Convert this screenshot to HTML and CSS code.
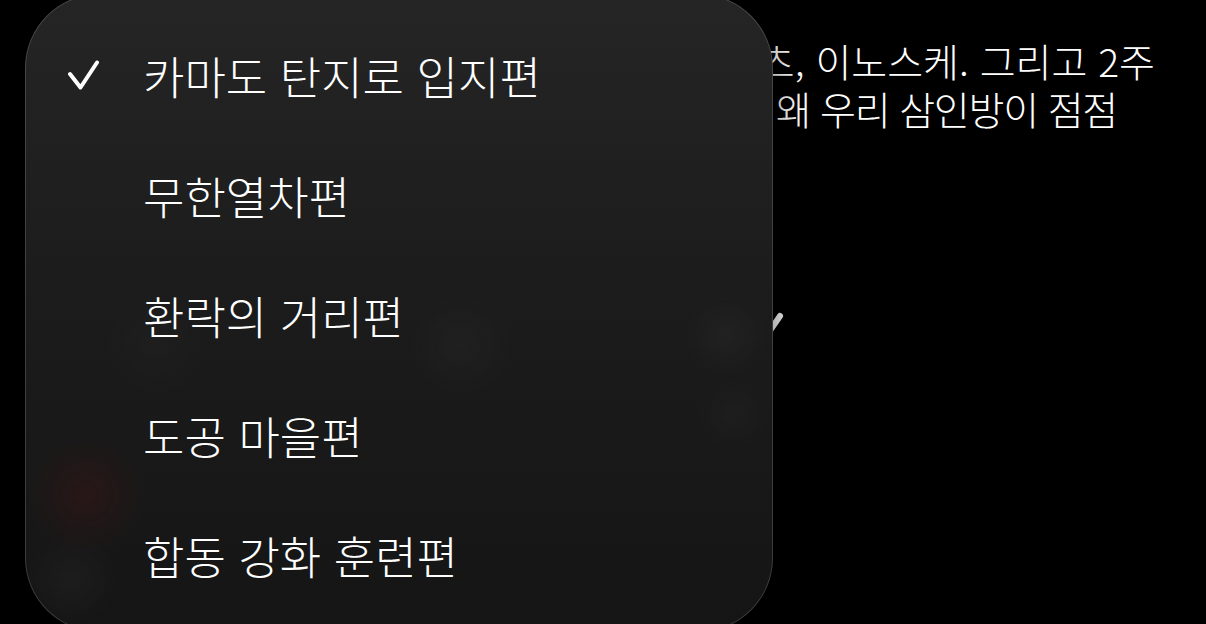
FILE: index.html
```html
<!DOCTYPE html>
<html lang="ko">
<head>
    <meta charset="UTF-8">
    <meta name="viewport" content="width=device-width, initial-scale=1.0">
    <title>귀멸의 칼날 - 시즌 선택</title>
    <link rel="stylesheet" href="styles.css">
</head>
<body>
    <div class="page">
        <div class="synopsis">
            <p class="line">젠이츠, 이노스케. 그리고 2주</p>
            <p class="line line-short">그런데 나 왜 우리 삼인방이 점점</p>
        </div>
        <div class="toggle">
            <svg width="30" height="24" viewBox="0 0 30 24">
                <path d="M4 4 L15 20 L26 4" fill="none" stroke="#fff" stroke-width="6" stroke-linecap="round" stroke-linejoin="round"/>
            </svg>
        </div>
    </div>

    <!-- season picker, opened over the page -->
    <div class="menu">
        <ul class="menu-list">
            <li class="item selected">
                <span class="check">
                    <svg width="32" height="30" viewBox="0 0 32 30">
                        <path d="M2 14 L12.5 27.5 L29 2.5" fill="none" stroke="#fff" stroke-width="4" stroke-linecap="round" stroke-linejoin="round"/>
                    </svg>
                </span>
                <span class="label">카마도 탄지로 입지편</span>
            </li>
            <li class="item">
                <span class="check"></span>
                <span class="label">무한열차편</span>
            </li>
            <li class="item">
                <span class="check"></span>
                <span class="label">환락의 거리편</span>
            </li>
            <li class="item">
                <span class="check"></span>
                <span class="label">도공 마을편</span>
            </li>
            <li class="item">
                <span class="check"></span>
                <span class="label">합동 강화 훈련편</span>
            </li>
        </ul>
    </div>
</body>
</html>
```

FILE: styles.css
```css
:root {
    --page-bg: #000;
    --text-color: #fff;
    --menu-border: rgba(255, 255, 255, 0.16);
}

* {
    box-sizing: border-box;
    margin: 0;
    padding: 0;
}

html, body {
    height: 100%;
}

body {
    font-family: 'Noto Sans CJK KR', 'Noto Sans', sans-serif;
    font-weight: 300;
    background-color: var(--page-bg);
    color: var(--text-color);
    overflow: hidden;
}

.page {
    padding-top: 36px;
}

.synopsis {
    padding-right: 51px;
}

.line {
    font-size: 39px;
    line-height: 48px;
    white-space: nowrap;
    text-align: right;
}

.line-short {
    padding-right: 38px;
    letter-spacing: -1.2px;
}

.toggle {
    margin: 180px 0 0 754px;
}

.toggle svg {
    display: block;
}

.menu {
    position: absolute;
    left: 25px;
    top: -6px;
    width: 748px;
    height: 638px;
    border-radius: 74px;
    border: 1px solid var(--menu-border);
    overflow: hidden;
    background:
        radial-gradient(circle at 60px 500px, rgba(110, 18, 18, 0.2), transparent 60px),
        radial-gradient(circle at 45px 585px, rgba(60, 60, 60, 0.18), transparent 45px),
        radial-gradient(circle at 435px 350px, rgba(70, 70, 70, 0.12), transparent 50px),
        radial-gradient(circle at 700px 340px, rgba(70, 70, 70, 0.15), transparent 40px),
        radial-gradient(circle at 708px 420px, rgba(60, 60, 60, 0.12), transparent 36px),
        radial-gradient(circle at 130px 350px, rgba(60, 60, 60, 0.1), transparent 50px),
        linear-gradient(180deg, #252525 0%, #1c1c1c 45%, #151515 100%);
    box-shadow: 0 10px 40px rgba(0, 0, 0, 0.6);
}

.menu-list {
    list-style: none;
    padding-top: 20px;
}

.item {
    display: flex;
    align-items: center;
    height: 120px;
    padding-left: 42px;
}

.check {
    width: 75px;
    flex-shrink: 0;
}

.check svg {
    display: block;
}

.label {
    font-size: 45px;
    line-height: 1;
    white-space: nowrap;
}
```
